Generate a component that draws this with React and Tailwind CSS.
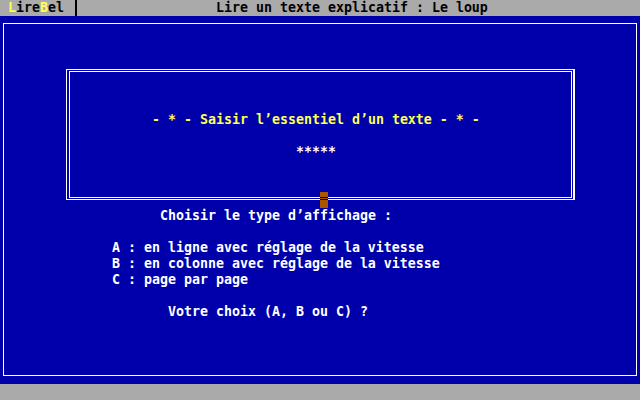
import React from 'react';

const mono = { fontFamily: '"DejaVu Sans Mono", "Liberation Mono", monospace' };

function Row({ pad, className = '', children }) {
  return (
    <div className={`h-4 whitespace-pre ${className}`} style={{ paddingLeft: pad }}>
      {children}
    </div>
  );
}

export default function App() {
  return (
    <div
      className="w-[640px] h-[400px] flex flex-col bg-[#0000aa] text-[13.29px] leading-4 font-bold overflow-hidden"
      style={mono}
    >
      {/* Top status bar */}
      <div className="h-4 bg-[#aaaaaa] flex items-stretch text-black">
        <div className="w-[75px] pl-2 whitespace-pre">
          <span className="text-[#ffff55]">L</span>ire<span className="text-[#ffff55]">B</span>el
        </div>
        <div className="w-[2px] bg-black" />
        <div className="pl-[139px] whitespace-pre">Lire un texte explicatif : Le loup</div>
      </div>

      {/* Main blue screen */}
      <div className="relative h-[368px] pt-[7px] px-[3px] pb-[8px]">
        <div className="h-full border border-white">
          {/* Double frame */}
          <div className="mt-[45px] ml-[62px] w-[509px] h-[131px] border-l border-t border-b border-r-2 border-white pl-[2px] pr-px py-px">
            <div className="h-full border border-white">
              <Row pad={82} className="mt-[40px] text-[#ffff55]">
                - * - Saisir l’essentiel d’un texte - * -
              </Row>
              <Row pad={226} className="mt-4 text-white">*****</Row>
            </div>
          </div>

          <div className="text-white">
            <Row pad={156} className="mt-2">Choisir le type d’affichage :</Row>
            <Row pad={108} className="mt-4">A : en ligne avec réglage de la vitesse</Row>
            <Row pad={108}>B : en colonne avec réglage de la vitesse</Row>
            <Row pad={108}>C : page par page</Row>
            <Row pad={164} className="mt-4">Votre choix (A, B ou C) ?</Row>
          </div>
        </div>

        {/* cursor block on the frame */}
        <div className="absolute left-[320px] top-[176px] w-2 h-4 bg-[#aa5500] pt-[5px]">
          <div className="h-[3px] border-y border-black" />
        </div>
      </div>

      {/* Bottom bar */}
      <div className="h-4 bg-[#aaaaaa]" />
    </div>
  );
}
